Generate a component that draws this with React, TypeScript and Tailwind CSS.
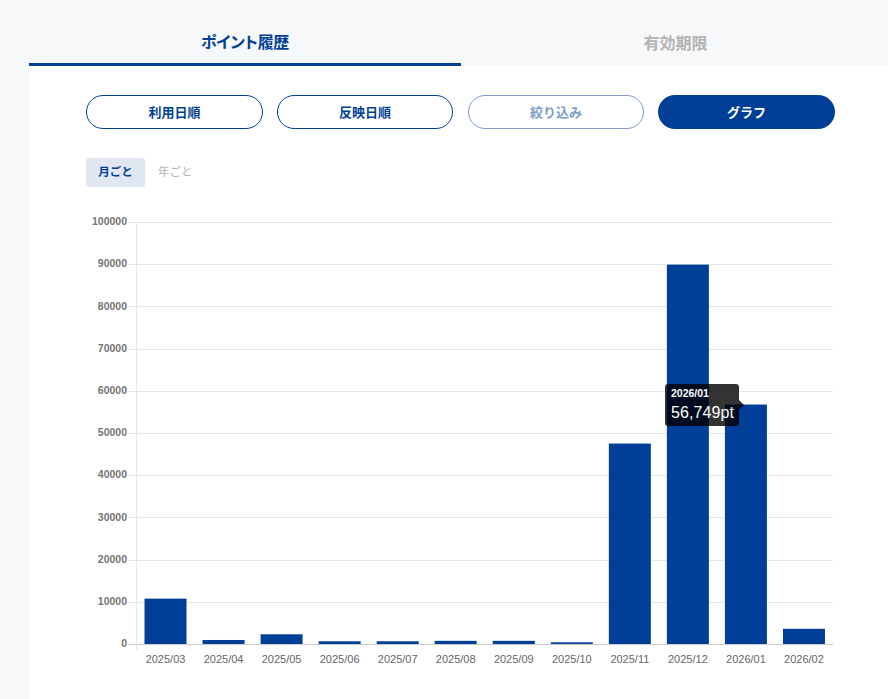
import React from 'react';

const fontStack = "font-['Liberation_Sans','Noto_Sans_CJK_JP',sans-serif]";

const chartData = [
  { label: '2025/03', value: 10750 },
  { label: '2025/04', value: 950 },
  { label: '2025/05', value: 2300 },
  { label: '2025/06', value: 650 },
  { label: '2025/07', value: 650 },
  { label: '2025/08', value: 750 },
  { label: '2025/09', value: 750 },
  { label: '2025/10', value: 400 },
  { label: '2025/11', value: 47500 },
  { label: '2025/12', value: 89900 },
  { label: '2026/01', value: 56749 },
  { label: '2026/02', value: 3600 },
];

const ticks = [0, 10000, 20000, 30000, 40000, 50000, 60000, 70000, 80000, 90000, 100000];

// svg origin is at page (86, 212)
const plotLeft = 50.5;
const plotRight = 747;
const plotTop = 10;
const plotBottom = 432;

function yFor(value: number) {
  return plotBottom - (value / 100000) * (plotBottom - plotTop);
}

function BarChart() {
  const step = (plotRight - plotLeft) / 12;
  return (
    <svg width={750} height={470} className="block">
      {ticks.map((t) => (
        <g key={t}>
          <line
            x1={plotLeft - 8}
            x2={plotRight}
            y1={Math.round(yFor(t)) + 0.5}
            y2={Math.round(yFor(t)) + 0.5}
            stroke={t === 0 ? '#c9c9c9' : '#e6e6e6'}
          />
          <text x={41} y={yFor(t) + 3.2} textAnchor="end" fontSize={10.5} fontWeight={700} fill="#757575">
            {t}
          </text>
        </g>
      ))}
      <line x1={plotLeft} x2={plotLeft} y1={plotTop} y2={plotBottom + 6} stroke="#e6e6e6" />
      {chartData.map((d, i) => {
        const top = yFor(d.value);
        return (
          <g key={d.label}>
            <rect x={plotLeft + step * i + 8} y={top} width={42} height={plotBottom - top} fill="#003f98" />
            <text x={plotLeft + step * i + step / 2} y={451} textAnchor="middle" fontSize={11} fill="#666666">
              {d.label}
            </text>
          </g>
        );
      })}
    </svg>
  );
}

export default function App() {
  return (
    <div className={`min-h-[699px] bg-[#f7f8fa] pl-[29px] overflow-hidden ${fontStack}`}>
      {/* Tabs */}
      <div className="flex h-[66px]">
        <div className="w-[432px] h-full flex items-center justify-center pt-[22px] border-b-[3px] border-[#003f98] text-[16px] font-bold tracking-[-0.3px] text-[#003f98] [font-feature-settings:'palt']">
          ポイント履歴
        </div>
        <div className="flex-1 h-full flex items-center justify-center pt-[21px] pl-[2px] text-[16px] font-bold text-[#b3b3b3]">
          有効期限
        </div>
      </div>

      <div className="bg-white h-[633px] pl-[57px] pr-[53px] pt-[29px]">
        {/* Buttons */}
        <div className="flex gap-[14px] h-[34px]">
          <button className="w-[177px] pt-[2px] rounded-full border border-[#003f98] bg-white text-[13px] font-bold text-[#003f98]">利用日順</button>
          <button className="w-[176px] pt-[2px] rounded-full border border-[#003f98] bg-white text-[13px] font-bold text-[#003f98]">反映日順</button>
          <button className="w-[176px] pt-[2px] ml-[1px] rounded-full border border-[#7f9fcb] bg-white text-[13px] font-bold text-[#7f9fcb]">絞り込み</button>
          <button className="w-[177px] pt-[2px] rounded-full bg-[#003f98] text-[13px] font-bold text-white">グラフ</button>
        </div>

        {/* Period toggle */}
        <div className="flex items-center mt-[29px] h-[29px]">
          <div className="w-[59px] h-full flex items-center justify-center rounded-[3px] bg-[#e0e7f1] text-[11.5px] font-bold text-[#003f98]">月ごと</div>
          <div className="ml-[13px] text-[11.5px] text-[#b3b3b3]">年ごと</div>
        </div>

        {/* Chart */}
        <div className="relative mt-[25px]">
          <BarChart />
          <div className="absolute left-[579px] top-[172px] w-[74px] h-[42px] rounded-[3px] bg-black/80 pl-[6px] pt-[4px] text-white leading-none">
            <div className="text-[10.5px] font-bold leading-[11px]">2026/01</div>
            <div className="text-[16px] leading-[18px] mt-[5px] whitespace-nowrap tracking-[0.1px]">56,749pt</div>
            <div className="absolute left-full top-[16px] w-0 h-0 border-y-[5px] border-y-transparent border-l-[5px] border-l-black/80" />
          </div>
        </div>
      </div>
    </div>
  );
}
